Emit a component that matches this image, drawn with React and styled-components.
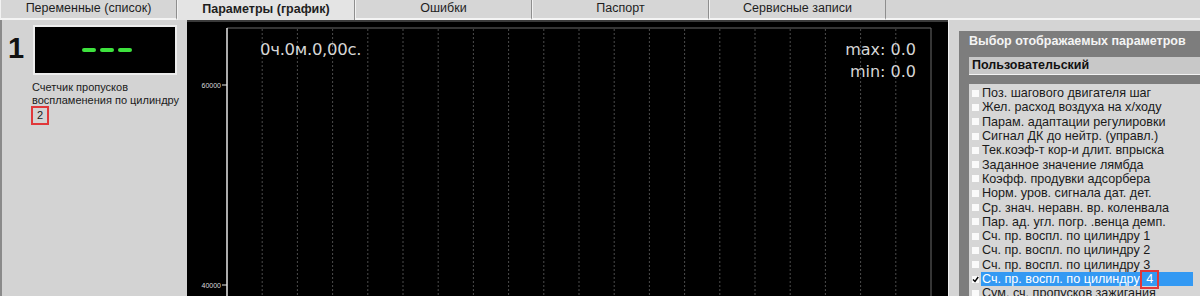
import React from 'react'
import styled, { createGlobalStyle } from 'styled-components'

const GlobalStyle = createGlobalStyle`
  html, body {
    margin: 0;
    padding: 0;
    background: #d4d4d4;
    overflow: hidden;
  }
  * {
    box-sizing: border-box;
  }
`

const tabs = [
  'Переменные (список)',
  'Параметры (график)',
  'Ошибки',
  'Паспорт',
  'Сервисные записи',
]

const params = [
  'Поз. шагового двигателя шаг',
  'Жел. расход воздуха на х/ходу',
  'Парам. адаптации регулировки',
  'Сигнал ДК до нейтр. (управл.)',
  'Тек.коэф-т кор-и длит. впрыска',
  'Заданное значение лямбда',
  'Коэфф. продувки адсорбера',
  'Норм. уров. сигнала дат. дет.',
  'Ср. знач. неравн. вр. коленвала',
  'Пар. ад. угл. погр. .венца демп.',
  'Сч. пр. воспл. по цилиндру 1',
  'Сч. пр. воспл. по цилиндру 2',
  'Сч. пр. воспл. по цилиндру 3',
  'Сч. пр. воспл. по цилиндру 4',
  'Сум. сч. пропусков зажигания',
]

const CHART_W = 761
const CHART_H = 276
const PLOT_L = 40
const PLOT_R = 744
const PLOT_T = 8

function App() {
  const step = (PLOT_R - PLOT_L) / 20
  const grid = Array.from({ length: 19 }, (_, i) => PLOT_L + step * (i + 1))

  return (
    <Screen>
      <GlobalStyle />
      <TabBar>
        {tabs.map((t, i) => (
          <Tab key={t} $active={i === 1}>
            {t}
          </Tab>
        ))}
        <TabFill />
      </TabBar>

      <Body>
        <LeftPanel>
          <GaugeRow>
            <BigIndex>1</BigIndex>
            <Display>
              <Dash />
              <Dash />
              <Dash />
            </Display>
          </GaugeRow>
          <GaugeLabel>Счетчик пропусков воспламенения по цилиндру</GaugeLabel>
          <GaugeValue>
            <Marked>2</Marked>
          </GaugeValue>
        </LeftPanel>

        <Chart>
          <svg width={CHART_W} height={CHART_H}>
            <line x1="0" y1="1" x2={CHART_W} y2="1" stroke="#3a3a3a" strokeWidth="2" />
            {grid.map((x) => (
              <line
                key={x}
                x1={x}
                y1={PLOT_T + 1}
                x2={x}
                y2={CHART_H}
                stroke="#4c4c4c"
                strokeDasharray="2 2"
              />
            ))}
            <line x1={PLOT_L} y1={PLOT_T} x2={PLOT_R} y2={PLOT_T} stroke="#6a6a6a" />
            <line x1={PLOT_R} y1={PLOT_T} x2={PLOT_R} y2={CHART_H} stroke="#6a6a6a" />
            <line x1={PLOT_L} y1={PLOT_T} x2={PLOT_L} y2={CHART_H} stroke="#e6e6e6" strokeWidth="1.5" />
            {[
              { y: 65, v: '60000' },
              { y: 265, v: '40000' },
            ].map((t) => (
              <g key={t.v}>
                <line x1={PLOT_L - 5} y1={t.y} x2={PLOT_L} y2={t.y} stroke="#e6e6e6" />
                <text
                  x={PLOT_L - 6}
                  y={t.y + 2.5}
                  fill="#dcdcdc"
                  fontSize="7"
                  fontFamily="'Liberation Sans', Arial, sans-serif"
                  textAnchor="end"
                >
                  {t.v}
                </text>
              </g>
            ))}
          </svg>
          <ChartOverlay>
            <TimeText>0ч.0м.0,00с.</TimeText>
            <Range>
              <div>max: 0.0</div>
              <div>min: 0.0</div>
            </Range>
          </ChartOverlay>
        </Chart>

        <SidePanel>
          <SelectorBox>
            <SelectorTitle>Выбор отображаемых параметров</SelectorTitle>
            <PresetField>Пользовательский</PresetField>
            <ParamList>
              {params.map((p, i) => {
                const selected = i === 13
                return (
                  <ParamRow key={p}>
                    <CheckBox>
                      {selected && (
                        <svg width="7" height="7" viewBox="0 0 7 7">
                          <path d="M1 3.5 L3 5.5 L6.2 1" stroke="#000" strokeWidth="1.4" fill="none" />
                        </svg>
                      )}
                    </CheckBox>
                    <ParamText $selected={selected}>
                      {selected ? (
                        <>
                          Сч. пр. воспл. по цилиндру <Marked>4</Marked>
                        </>
                      ) : (
                        p
                      )}
                    </ParamText>
                  </ParamRow>
                )
              })}
            </ParamList>
          </SelectorBox>
        </SidePanel>
      </Body>
    </Screen>
  )
}

const Screen = styled.div`
  width: 1200px;
  height: 296px;
  display: flex;
  flex-direction: column;
  background: #d4d4d4;
  font-family: 'Liberation Sans', Arial, sans-serif;
  overflow: hidden;
`

const TabBar = styled.div`
  height: 20px;
  display: flex;
  background: #d4d4d4;
`

const Tab = styled.div`
  width: ${(p) => (p.$active ? '178px' : '177px')};
  height: 20px;
  display: flex;
  justify-content: center;
  align-items: center;
  padding-bottom: 3px;
  font-size: 12.5px;
  color: #1e1e1e;
  font-weight: ${(p) => (p.$active ? 700 : 400)};
  background: ${(p) => (p.$active ? '#e4e4e4' : '#d6d6d6')};
  border-left: 1px solid #f2f2f2;
  border-right: 1px solid #8e8e8e;
  border-bottom: ${(p) => (p.$active ? 'none' : '2px solid #f4f4f4')};
`

const TabFill = styled.div`
  flex: 1;
  border-bottom: 2px solid #f4f4f4;
`

const Body = styled.div`
  flex: 1;
  display: flex;
  min-height: 0;
`

const LeftPanel = styled.div`
  width: 187px;
  background: #d3d3d3;
  border-left: 2px solid #8a8a8a;
  padding: 5px 0 0 6px;
`

const GaugeRow = styled.div`
  display: flex;
  align-items: center;
`

const BigIndex = styled.div`
  width: 25px;
  font-size: 29px;
  font-weight: 700;
  color: #111;
  line-height: 1;
  margin-top: -4px;
`

const Display = styled.div`
  width: 144px;
  height: 50px;
  background: #000;
  border: 2px solid #ededed;
  display: flex;
  justify-content: center;
  align-items: center;
  gap: 4px;
  padding-left: 4px;
`

const Dash = styled.span`
  width: 14px;
  height: 4px;
  border-radius: 2px;
  background: #3ee23e;
`

const GaugeLabel = styled.div`
  margin: 6px 0 0 24px;
  font-size: 11px;
  line-height: 13px;
  color: #1a1a1a;
  width: 155px;
`

const GaugeValue = styled.div`
  margin: 2px 0 0 26px;
  font-size: 11px;
  line-height: 13px;
  color: #1a1a1a;
`

const Marked = styled.span`
  display: inline-block;
  outline: 2px solid #e0383a;
  outline-offset: 1px;
  padding: 0 3px;
  line-height: 13px;
`

const Chart = styled.div`
  position: relative;
  width: ${CHART_W}px;
  height: ${CHART_H}px;
  background: #000;

  svg {
    display: block;
  }
`

const ChartOverlay = styled.div`
  position: absolute;
  top: 19px;
  left: 73px;
  right: 32px;
  display: flex;
  justify-content: space-between;
  font-family: 'DejaVu Sans', Verdana, sans-serif;
  font-size: 16px;
  line-height: 22px;
  color: #d6d6d6;
`

const TimeText = styled.div`
  font-size: 16.5px;
  letter-spacing: -0.3px;
`

const Range = styled.div`
  text-align: right;
`

const SidePanel = styled.div`
  flex: 1;
  background: #d4d4d4;
  padding: 11px 0 0 10px;
  border-left: 1px solid #f0f0f0;
`

const SelectorBox = styled.div`
  height: 100%;
  background: #7d7d7d;
  display: flex;
  flex-direction: column;
`

const SelectorTitle = styled.div`
  padding: 1px 0 0 10px;
  height: 18px;
  line-height: 18px;
  font-size: 12.5px;
  font-weight: 700;
  color: #f4f4f4;
`

const PresetField = styled.div`
  margin: 8px 0 0 10px;
  height: 18px;
  padding-left: 3px;
  line-height: 17px;
  font-size: 12.5px;
  font-weight: 700;
  color: #111;
  background: #c8c8c8;
  border-bottom: 1px solid #f2f2f2;
`

const ParamList = styled.div`
  flex: 1;
  margin: 9px 0 0 10px;
  padding: 2px 0 0 3px;
  background: #d6d6d6;
`

const ParamRow = styled.div`
  height: 14.3px;
  display: flex;
  align-items: center;
`

const CheckBox = styled.span`
  width: 7px;
  height: 7px;
  background: #fafafa;
  flex: none;
  display: flex;
  margin-right: 2px;
`

const ParamText = styled.span`
  flex: 1;
  font-size: 12.6px;
  line-height: 14px;
  padding-left: 1px;
  color: ${(p) => (p.$selected ? '#fff' : '#1a1a1a')};
  background: ${(p) => (p.$selected ? '#3399f3' : 'transparent')};
  margin-right: ${(p) => (p.$selected ? '7px' : '0')};
  white-space: nowrap;
`

export default App
